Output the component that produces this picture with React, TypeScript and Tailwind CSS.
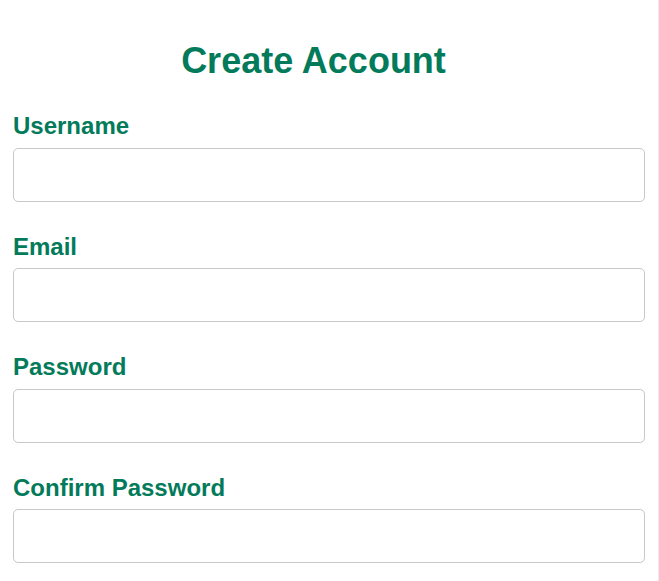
import { useState } from "react";

const fields = [
  { id: "username", label: "Username", type: "text" },
  { id: "email", label: "Email", type: "email" },
  { id: "password", label: "Password", type: "password" },
  { id: "confirm", label: "Confirm Password", type: "password" },
];

export default function App() {
  const [values, setValues] = useState<Record<string, string>>({});

  return (
    <div className="min-h-[581px] w-[659px] border-r border-[#ececec] bg-white px-[13px] font-['Liberation_Sans',Arial,sans-serif]">
      <h1 className="pt-[41px] pr-[31px] text-center text-[36px] leading-[40px] font-bold text-[#037b5b]">
        Create Account
      </h1>
      <form className="mt-[32px] flex flex-col gap-[32px]">
        {fields.map((f) => (
          <div key={f.id} className="flex flex-col gap-[8.6px]">
            <label
              htmlFor={f.id}
              className="text-[24px] leading-[26px] font-bold text-[#037b5b]"
            >
              {f.label}
            </label>
            <input
              id={f.id}
              type={f.type}
              value={values[f.id] ?? ""}
              onChange={(e) => setValues({ ...values, [f.id]: e.target.value })}
              className="h-[54px] w-full rounded-[5px] border border-[#c8c8c8] px-3 text-base outline-none"
            />
          </div>
        ))}
      </form>
    </div>
  );
}
